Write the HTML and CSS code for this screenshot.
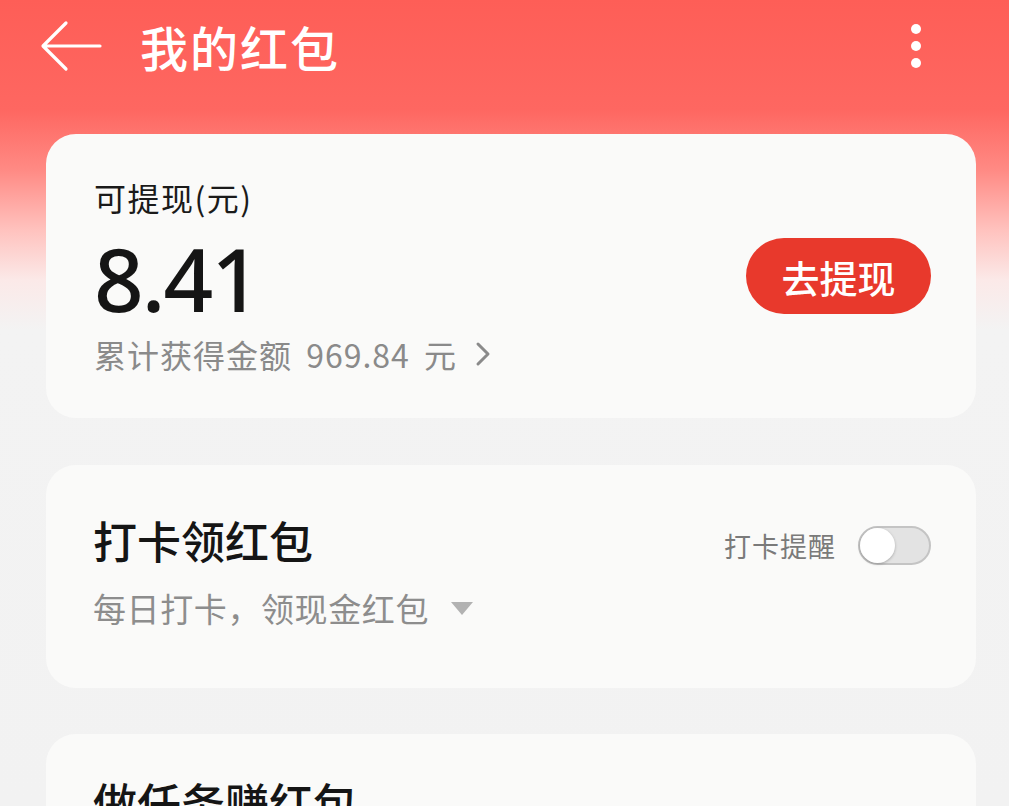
FILE: index.html
```html
<!DOCTYPE html>
<html lang="zh-CN">
<head>
    <meta charset="UTF-8">
    <title>我的红包</title>
    <link rel="stylesheet" href="styles.css">
</head>
<body>
    <div class="header">
        <svg class="back" width="62" height="54" viewBox="0 0 62 54">
            <path d="M60 27H4M26 4L3 27l23 23" fill="none" stroke="#fff" stroke-width="3.2" stroke-linecap="round" stroke-linejoin="round"/>
        </svg>
        <h1>我的红包</h1>
        <div class="more"><i></i><i></i><i></i></div>
    </div>

    <div class="card balance">
        <div class="balance-info">
            <div class="label">可提现(元)</div>
            <div class="amount">8.41</div>
            <div class="total">累计获得金额 969.84 元
                <svg width="16" height="26" viewBox="0 0 16 26"><path d="M3 3l10 10-10 10" fill="none" stroke="#8a8a8a" stroke-width="3" stroke-linecap="round" stroke-linejoin="round"/></svg>
            </div>
        </div>
        <button class="withdraw">去提现</button>
    </div>

    <div class="card checkin">
        <div class="checkin-info">
            <div class="title">打卡领红包</div>
            <div class="sub">每日打卡，领现金红包 <span class="tri"></span></div>
        </div>
        <div class="remind">
            <span>打卡提醒</span>
            <span class="switch"><span class="knob"></span></span>
        </div>
    </div>

    <div class="card task">
        <div class="title">做任务赚红包</div>
    </div>
</body>
</html>
```

FILE: styles.css
```css
body {
    margin: 0;
    height: 806px;
    overflow: hidden;
    font-family: "Noto Sans CJK SC", "Noto Sans", sans-serif;
    background: linear-gradient(180deg, #fe5e57 0, #fe6761 110px, #ff8a84 170px, #ffc2be 230px, #fbe9e8 280px, #f3f3f3 330px, #f2f2f2 100%);
}
.header {
    height: 100px;
    display: flex;
    align-items: center;
    padding: 0 40px;
    box-sizing: border-box;
    margin-top: -4px;
}
.back {
    flex: none;
}
.header h1 {
    margin: 0 0 0 38px;
    color: #fff;
    font-size: 48px;
    font-weight: 500;
    letter-spacing: 2px;
    flex: 1;
}
.more {
    display: flex;
    flex-direction: column;
    gap: 7px;
    margin-right: 48px;
}
.more i {
    width: 10px;
    height: 10px;
    border-radius: 50%;
    background: #fff;
}
.card {
    margin: 0 33px 0 46px;
    background: #fafaf9;
    border-radius: 30px;
    box-sizing: border-box;
}
.balance {
    margin-top: 38px;
    height: 284px;
    display: flex;
    align-items: flex-start;
    justify-content: space-between;
    padding: 41px 45px 0 48px;
}
.label {
    font-size: 32px;
    color: #1a1a1a;
    line-height: 44px;
    letter-spacing: 1.5px;
}
.amount {
    font-family: "Noto Sans", sans-serif;
    font-size: 87px;
    font-weight: 500;
    color: #151515;
    line-height: 96px;
    margin-top: 11px;
    letter-spacing: -2px;
}
.total {
    font-size: 32px;
    color: #8a8a8a;
    line-height: 44px;
    margin-top: 6px;
    letter-spacing: 1px;
    word-spacing: 6px;
    display: flex;
    align-items: center;
    gap: 18px;
}
.withdraw {
    align-self: center;
    margin-top: -41px;
    width: 185px;
    height: 76px;
    border: none;
    border-radius: 38px;
    background: #e8392c;
    color: #fff;
    font-family: inherit;
    font-size: 38px;
    font-weight: 500;
}
.checkin {
    margin-top: 47px;
    height: 223px;
    display: flex;
    justify-content: space-between;
    padding: 45px 45px 0 47px;
}
.title {
    font-size: 44px;
    font-weight: 500;
    color: #151515;
    line-height: 60px;
}
.sub {
    margin-top: 16px;
    font-size: 33px;
    color: #8d8d8d;
    line-height: 44px;
    letter-spacing: 0.6px;
    display: flex;
    align-items: center;
    gap: 22px;
}
.tri {
    width: 0;
    height: 0;
    border-left: 11px solid transparent;
    border-right: 11px solid transparent;
    border-top: 13px solid #b2b2b2;
}
.remind {
    display: flex;
    align-items: center;
    gap: 22px;
    height: 48px;
    margin-top: 11px;
    font-size: 27px;
    color: #7a7a7a;
    letter-spacing: 1px;
}
.switch {
    width: 73px;
    height: 39px;
    border-radius: 20px;
    background: #e3e3e3;
    border: 2px solid #c4c4c4;
    box-sizing: border-box;
    position: relative;
}
.knob {
    position: absolute;
    left: 0;
    top: 0;
    width: 35px;
    height: 35px;
    border-radius: 50%;
    background: #fff;
    box-shadow: 0 1px 3px rgba(0,0,0,0.25);
}
.task {
    margin-top: 46px;
    height: 200px;
    padding: 38px 47px 0;
}
```
